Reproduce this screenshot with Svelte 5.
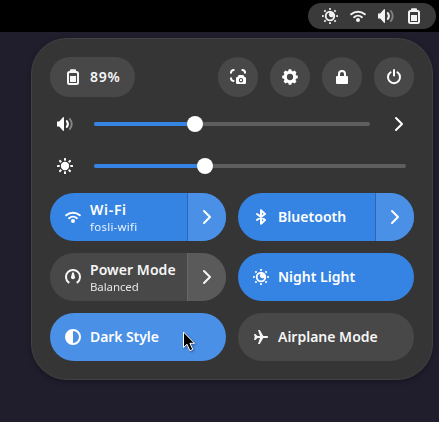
<script>
  let volume = $state(101);
  let brightness = $state(111);

  const toggles = [
    { icon: 'wifi', title: 'Wi-Fi', sub: 'fosli-wifi', on: true, menu: true, spacing: 0.7, subSpacing: 0.25 },
    { icon: 'bluetooth', title: 'Bluetooth', on: true, menu: true, spacing: 0.05 },
    { icon: 'power-mode', title: 'Power Mode', sub: 'Balanced', on: false, menu: true, spacing: 0.06, subSpacing: -0.1 },
    { icon: 'night', title: 'Night Light', on: true, menu: false, spacing: 0 },
    { icon: 'dark', title: 'Dark Style', on: true, menu: false, hover: true, spacing: -0.08 },
    { icon: 'airplane', title: 'Airplane Mode', on: false, menu: false, spacing: 0 }
  ];
</script>

{#snippet icon(name)}
  <svg class="icon" viewBox="0 0 16 16" width="16" height="16" fill="currentColor" aria-hidden="true">
    {#if name === 'night'}
      {#each [0, 45, 90, 135, 180, 225, 270, 315] as a}
        <rect x="7" y="0" width="2" height="1.800" rx=".4" transform="rotate({a} 8 8)" />
      {/each}
      <path fill-rule="evenodd" d="M8 2.800a5.200 5.200 0 1 0 0 10.400A5.200 5.200 0 0 0 8 2.800ZM7.600 4.700A2.500 2.500 0 1 0 11.300 8.400 3.350 3.350 0 1 1 7.600 4.700Z" />
    {:else if name === 'wifi'}
      <g fill="none" stroke="currentColor" stroke-width="2" stroke-linecap="round">
        <path d="M1.200 6.300a10.200 10.200 0 0 1 13.600 0" />
        <path d="M4.100 9.200a6 6 0 0 1 7.800 0" />
      </g>
      <circle cx="8" cy="12" r="2" />
    {:else if name === 'volume'}
      <path d="M0 5.500h2.200L6 1.300Q7 .6 7 2v12q0 1.400-1 .7L2.200 10.500H0Z" />
      <path d="M9.800 5q2.200 3 0 6" fill="none" stroke="currentColor" stroke-width="2" stroke-linecap="round" />
      <path d="M12.900 3q3.600 5 0 10" fill="none" stroke="currentColor" stroke-width="2" stroke-linecap="round" opacity=".38" />
    {:else if name === 'battery'}
      <path d="M6 .2h4q1 0 1 1V3H5V1.200q0-1 1-1Z" />
      <rect x="3" y="3" width="10" height="12" rx="1.500" fill="none" stroke="currentColor" stroke-width="2" />
      <rect x="5" y="7" width="6" height="6" />
    {:else if name === 'shot'}
      <g fill="none" stroke="currentColor" stroke-width="2" stroke-linecap="round">
        <path d="M1 3.700A2.700 2.700 0 0 1 3.700 1M12.300 1A2.700 2.700 0 0 1 15 3.700M1 9.300A2.700 2.700 0 0 0 3.500 12" />
      </g>
      <path fill-rule="evenodd" d="M7.500 8 8.700 6h4.600l1.200 2h.2q1.300 0 1.300 1.300v4.400q0 1.300-1.300 1.300H7.300Q6 15 6 13.700V9.300Q6 8 7.300 8ZM11 9a2.200 2.200 0 1 0 0 4.400A2.200 2.200 0 0 0 11 9Z" />
      <circle cx="11" cy="11.200" r="1.100" />
    {:else if name === 'settings'}
      {#each [0, 45, 90, 135, 180, 225, 270, 315] as a}
        <path d="M6 3 6.700.2h2.600L10 3Z" transform="rotate({a} 8 8)" />
      {/each}
      <circle cx="8" cy="8" r="4.700" fill="none" stroke="currentColor" stroke-width="3.100" />
    {:else if name === 'lock'}
      <path d="M5 8V5a3 3 0 0 1 6 0v3" fill="none" stroke="currentColor" stroke-width="2" />
      <rect x="2" y="7" width="12" height="8" rx="1" />
    {:else if name === 'power'}
      <path d="M4.600 3.200a6 6 0 1 0 6.800 0" fill="none" stroke="currentColor" stroke-width="2" stroke-linecap="round" />
      <path d="M8 1v5.500" stroke="currentColor" stroke-width="2" stroke-linecap="round" />
    {:else if name === 'sun'}
      <circle cx="8" cy="8" r="4.200" />
      {#each [0, 45, 90, 135, 180, 225, 270, 315] as a}
        <rect x="7" y="0" width="2" height="2.700" rx=".6" transform="rotate({a} 8 8)" />
      {/each}
    {:else if name === 'bluetooth'}
      <path d="M4 5 12 11 8 14.700V1.300L12 5 4 11" fill="none" stroke="currentColor" stroke-width="2" stroke-linejoin="round" stroke-linecap="round" />
    {:else if name === 'power-mode'}
      <path d="M3.600 13.400A7 7 0 1 1 12.400 13.400" fill="none" stroke="currentColor" stroke-width="2" stroke-linecap="round" />
      <path d="M7.200 3.500h1.600L10 8.200a2 2 0 1 1-4 0Z" />
    {:else if name === 'dark'}
      <path fill-rule="evenodd" d="M8 0a8 8 0 1 0 0 16A8 8 0 0 0 8 0Zm0 2a6 6 0 0 1 0 12Z" />
    {:else if name === 'airplane'}
      <path d="M1 5h1.400L4.500 7.100H7L5 1h1.800L10.300 7.100H14q1.200 0 1.200.9T14 8.900h-3.700L6.800 15H5L7 8.900H4.500L2.400 11H1l.7-3Z" />
    {:else if name === 'chevron'}
      <path d="M5 2 11 8 5 14" fill="none" stroke="currentColor" stroke-width="2" stroke-linecap="round" stroke-linejoin="round" />
    {/if}
  </svg>
{/snippet}

<div class="screen">
  <header class="topbar">
    <div class="status">
      {@render icon('night')}
      {@render icon('wifi')}
      {@render icon('volume')}
      {@render icon('battery')}
    </div>
  </header>

  <main class="panel">
    <div class="system">
      <button class="battery">{@render icon('battery')}<span>89%</span></button>
      <div class="actions">
        <button class="round" aria-label="Screenshot">{@render icon('shot')}</button>
        <button class="round" aria-label="Settings">{@render icon('settings')}</button>
        <button class="round" aria-label="Lock">{@render icon('lock')}</button>
        <button class="round" aria-label="Power">{@render icon('power')}</button>
      </div>
    </div>

    <div class="slider">
      {@render icon('volume')}
      <div class="track"><div class="fill" style:width="{volume}px"></div></div>
      <button class="more" aria-label="Sound output">{@render icon('chevron')}</button>
    </div>
    <div class="slider">
      {@render icon('sun')}
      <div class="track"><div class="fill" style:width="{brightness}px"></div></div>
    </div>

    <div class="grid">
      {#each toggles as t}
        <div class="toggle" class:on={t.on} class:hover={t.hover}>
          <button class="body">
            {@render icon(t.icon)}
            <span class="label">
              <span class="title" style:letter-spacing="{t.spacing}px">{t.title}</span>
              {#if t.sub}<span class="sub" style:letter-spacing="{t.subSpacing}px">{t.sub}</span>{/if}
            </span>
          </button>
          {#if t.menu}
            <button class="menu" aria-label="{t.title} menu">{@render icon('chevron')}</button>
          {/if}
        </div>
      {/each}
    </div>
  </main>

  <svg class="cursor" viewBox="0 0 14 22" width="14" height="22" aria-hidden="true">
    <path d="M1.500 1v15.500l3.500-3.300 2.900 6.500 2.900-1.300-2.900-6.100h4.600Z" fill="#000" stroke="#fff" stroke-width="1" />
  </svg>
</div>

<style>
  :global(body) {
    background: #201e2d;
  }
  .screen {
    position: relative;
    width: 439px;
    height: 422px;
    overflow: hidden;
    background: #201e2d;
    color: #fff;
    font-family: 'Noto Sans', 'Open Sans', sans-serif;
    font-size: 14px;
  }
  button {
    border: 0;
    margin: 0;
    padding: 0;
    background: none;
    color: inherit;
    font: inherit;
  }
  .icon {
    display: block;
    flex: none;
  }
  .topbar {
    display: flex;
    justify-content: flex-end;
    height: 32px;
    padding: 3px 3px 3px 0;
    box-sizing: border-box;
    background: #000;
  }
  .status {
    display: flex;
    align-items: center;
    gap: 12px;
    padding: 0 14px;
    border-radius: 13px;
    background: #3a3a3a;
    color: #f2f2f2;
  }
  .panel {
    box-sizing: border-box;
    width: 402px;
    height: 342px;
    margin: 6px 0 0 31px;
    padding: 18px;
    border: 1px solid #424242;
    border-radius: 36px;
    background: #353535;
    box-shadow: 0 2px 5px rgba(0, 0, 0, 0.3);
  }
  .system {
    display: flex;
    justify-content: space-between;
    margin-bottom: 6px;
  }
  .battery {
    display: flex;
    align-items: center;
    gap: 9px;
    height: 40px;
    width: 85px;
    padding-left: 15px;
    border-radius: 20px;
    background: #484848;
    font-weight: 600;
    letter-spacing: 0.8px;
    line-height: 18px;
    color: #f7f7f7;
  }
  .battery span {
    padding-bottom: 1px;
  }
  .actions {
    display: flex;
    gap: 12px;
  }
  .round {
    display: grid;
    place-items: center;
    width: 40px;
    height: 40px;
    border-radius: 50%;
    background: #484848;
  }
  .slider {
    display: flex;
    align-items: center;
    height: 42px;
    padding: 0 8px 0 7px;
  }
  .track {
    flex: 1;
    height: 4px;
    margin-left: 21px;
    border-radius: 2px;
    background: #5e5e5e;
  }
  .fill {
    position: relative;
    height: 4px;
    border-radius: 2px;
    background: #3584e4;
  }
  .fill::after {
    content: '';
    position: absolute;
    right: -8px;
    top: -6px;
    width: 16px;
    height: 16px;
    border-radius: 50%;
    background: #fff;
  }
  .more {
    margin: 0 -1px 0 21px;
  }
  .grid {
    display: grid;
    grid-template-columns: 176px 176px;
    grid-auto-rows: 48px;
    gap: 12px;
    margin-top: 6px;
  }
  .toggle {
    display: flex;
    overflow: hidden;
    border-radius: 24px;
    background: #484848;
    color: #f6f6f6;
  }
  .toggle.on {
    background: #3584e4;
    color: #fff;
  }
  .toggle.hover {
    background: #4a90e6;
  }
  .body {
    flex: 1;
    display: flex;
    align-items: center;
    gap: 9px;
    padding-left: 15px;
    text-align: left;
  }
  .label {
    display: flex;
    flex-direction: column;
    white-space: nowrap;
  }
  .title {
    font-weight: 600;
    line-height: 18px;
  }
  .sub {
    font-size: 11.5px;
    line-height: 15px;
    opacity: 0.9;
  }
  .menu {
    box-sizing: border-box;
    display: grid;
    place-items: center;
    width: 39px;
    border-left: 1px solid #686868;
    background: #5a5a5a;
  }
  .on .menu {
    border-color: #2a69b7;
    background: #4a90e6;
  }
  .cursor {
    position: absolute;
    left: 182px;
    top: 331px;
    filter: drop-shadow(1px 1px 1px rgba(0, 0, 0, 0.35));
  }
</style>
